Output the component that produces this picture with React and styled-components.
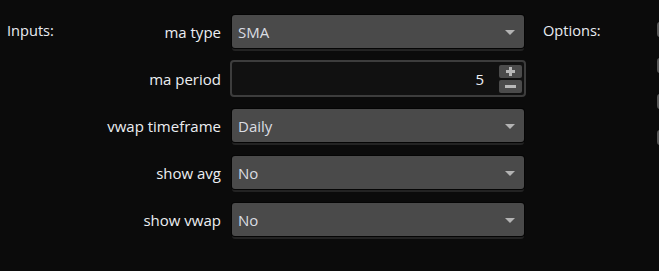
import React from "react";
import styled, { createGlobalStyle } from "styled-components";

const GlobalStyle = createGlobalStyle`
  html, body { margin: 0; padding: 0; background: #0b0b0b; }
  body { font-family: "Open Sans", "Noto Sans", sans-serif; }
`;

const Root = styled.div`
  width: 659px;
  height: 271px;
  overflow: hidden;
  display: flex;
  align-items: flex-start;
  padding-left: 7px;
  box-sizing: border-box;
  background: #0b0b0b;
  color: #e6e6e6;
  font-size: 15px;
`;

const SectionTitle = styled.div`
  flex: none;
  width: ${(p) => p.$width}px;
  margin-left: ${(p) => p.$offset || 0}px;
  margin-top: 20px;
  line-height: 20px;
  font-size: 14.6px;
  color: #e8ecf2;
`;

const Form = styled.div`
  flex: none;
  display: grid;
  grid-template-columns: 163px 296px;
  grid-auto-rows: 47px;
  align-items: center;
  padding-top: 8px;
  margin-left: -60px;
  padding-left: 60px;
`;

const Label = styled.div`
  text-align: right;
  padding-right: 9px;
  line-height: 20px;
  color: #eceef2;
  white-space: nowrap;
`;

const Select = styled.div`
  margin: 0 2px;
  height: 33px;
  box-sizing: border-box;
  display: flex;
  align-items: center;
  justify-content: space-between;
  padding: 0 9px 0 6px;
  background: #4a4a4a;
  border-radius: 3px;
  box-shadow: 0 0 0 1px #050505, 0 3px 0 0 #232323;
  color: #dadde2;
`;

const Arrow = styled.span`
  width: 0;
  height: 0;
  border-left: 5.5px solid transparent;
  border-right: 5.5px solid transparent;
  border-top: 5px solid #b4b4b4;
  margin-top: 1px;
`;

const NumberBox = styled.div`
  height: 37px;
  box-sizing: border-box;
  display: flex;
  align-items: center;
  justify-content: flex-end;
  gap: 15px;
  padding: 0 2px 0 8px;
  background: #111111;
  border: 2px solid #3d3d3d;
  border-radius: 4px;
  color: #eceff3;
`;

const NumberValue = styled.span`
  line-height: 20px;
`;

const Spinner = styled.div`
  display: flex;
  flex-direction: column;
  gap: 2px;
`;

const SpinButton = styled.div`
  width: 23px;
  height: 13px;
  background: #4b4b4b;
  border-radius: 2px;
  display: flex;
  align-items: center;
  justify-content: center;
`;

const Checks = styled.div`
  flex: none;
  display: flex;
  flex-direction: column;
  gap: 21px;
  padding-top: 22px;
`;

const Check = styled.div`
  width: 15px;
  height: 15px;
  background: #585858;
  border-radius: 3px;
`;

const PlusIcon = () => (
  <svg width="9" height="9" viewBox="0 0 9 9">
    <rect x="3" y="0" width="3" height="9" fill="#b8b8b8" />
    <rect x="0" y="3" width="9" height="3" fill="#b8b8b8" />
  </svg>
);

const MinusIcon = () => (
  <svg width="11" height="3" viewBox="0 0 11 3">
    <rect x="0" y="0" width="11" height="3" fill="#b8b8b8" />
  </svg>
);

const rows = [
  { label: "ma type", kind: "select", value: "SMA" },
  { label: "ma period", kind: "number", value: "5" },
  { label: "vwap timeframe", kind: "select", value: "Daily" },
  { label: "show avg", kind: "select", value: "No" },
  { label: "show vwap", kind: "select", value: "No" },
];

export default function App() {
  return (
    <>
      <GlobalStyle />
      <Root>
        <SectionTitle $width={60}>Inputs:</SectionTitle>
        <Form>
          {rows.map((r) => (
            <React.Fragment key={r.label}>
              <Label>{r.label}</Label>
              {r.kind === "select" ? (
                <Select>
                  <span>{r.value}</span>
                  <Arrow />
                </Select>
              ) : (
                <NumberBox>
                  <NumberValue>{r.value}</NumberValue>
                  <Spinner>
                    <SpinButton>
                      <PlusIcon />
                    </SpinButton>
                    <SpinButton>
                      <MinusIcon />
                    </SpinButton>
                  </Spinner>
                </NumberBox>
              )}
            </React.Fragment>
          ))}
        </Form>
        <SectionTitle $width={114} $offset={17}>
          Options:
        </SectionTitle>
        <Checks>
          <Check />
          <Check />
          <Check />
          <Check />
        </Checks>
      </Root>
    </>
  );
}
